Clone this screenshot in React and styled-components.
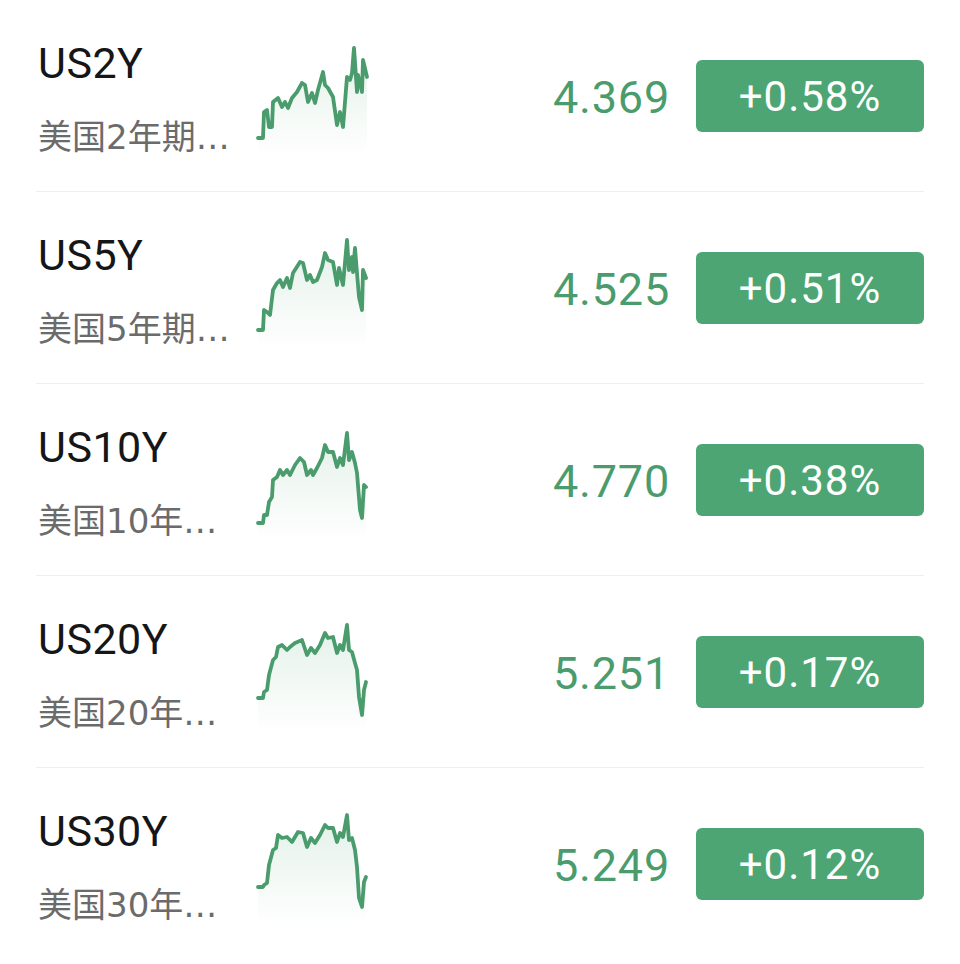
import React from "react";
import styled, { createGlobalStyle } from "styled-components";

const GlobalStyle = createGlobalStyle`
  body {
    margin: 0;
    background: #ffffff;
    font-family: Roboto, "Noto Sans CJK SC", sans-serif;
  }
`;

const List = styled.div`
  margin: 0 36px;
  display: flex;
  flex-direction: column;
`;

const Row = styled.div`
  height: 191px;
  display: flex;
  flex-direction: row;
  align-items: center;
  padding-left: 2px;
  border-bottom: ${(props) => (props.last ? "none" : "1px solid #eeeeee")};
`;

const NameColumn = styled.div`
  width: 198px;
  padding: 5px 20px 0 0;
  display: flex;
  flex-direction: column;
`;

const Symbol = styled.div`
  font-size: 43px;
  line-height: 50px;
  color: #161616;
  letter-spacing: 0.5px;
`;

const Subtitle = styled.div`
  margin-top: 27px;
  font-family: "DejaVu Sans", "Noto Sans CJK SC", sans-serif;
  font-size: 34px;
  line-height: 44px;
  color: #6b6b6b;
  white-space: nowrap;
  overflow: hidden;
  text-overflow: ellipsis;
`;

const Spark = styled.svg`
  flex-shrink: 0;
  display: block;
  align-self: stretch;
`;

const Spacer = styled.div`
  flex: 1;
`;

const Price = styled.div`
  padding-top: 4px;
  font-size: 45px;
  line-height: 54px;
  color: #4a9c6d;
  letter-spacing: 0.8px;
`;

const Badge = styled.div`
  margin-left: 26px;
  width: 228px;
  height: 72px;
  border-radius: 6px;
  background: #4ea574;
  color: #ffffff;
  display: flex;
  justify-content: center;
  align-items: center;
  font-size: 42px;
  letter-spacing: 1px;
  padding-top: 2px;
  box-sizing: border-box;
`;

const rows = [
  {
    symbol: "US2Y",
    name: "美国2年期国债收益率",
    price: "4.369",
    change: "+0.58%",
    points: [
      [258, 138], [263, 138], [264, 112], [267, 110], [269, 127], [272, 127],
      [273, 102], [278, 98], [282, 107], [285, 102], [288, 108], [292, 98],
      [297, 92], [302, 83], [305, 85], [308, 102], [312, 93], [315, 103],
      [318, 90], [323, 72], [325, 85], [328, 88], [333, 97], [337, 125],
      [340, 112], [343, 127], [347, 77], [350, 80], [352, 73], [354, 48],
      [357, 92], [358, 75], [362, 92], [363, 60], [367, 77],
    ],
  },
  {
    symbol: "US5Y",
    name: "美国5年期国债收益率",
    price: "4.525",
    change: "+0.51%",
    points: [
      [258, 138], [263, 138], [264, 118], [267, 120], [270, 123], [273, 98],
      [277, 91], [280, 88], [283, 95], [287, 86], [290, 96], [293, 81],
      [300, 70], [303, 71], [307, 88], [310, 83], [313, 90], [317, 88],
      [322, 75], [325, 61], [328, 68], [333, 70], [337, 93], [339, 76],
      [343, 93], [347, 48], [349, 78], [352, 65], [353, 80], [355, 56],
      [357, 81], [359, 105], [362, 118], [363, 78], [366, 86],
    ],
  },
  {
    symbol: "US10Y",
    name: "美国10年期国债收益率",
    price: "4.770",
    change: "+0.38%",
    points: [
      [258, 139], [263, 139], [264, 131], [267, 131], [269, 118], [272, 113],
      [273, 96], [277, 93], [280, 86], [283, 91], [287, 86], [290, 91],
      [295, 81], [300, 74], [304, 78], [307, 91], [311, 86], [313, 91],
      [317, 84], [322, 74], [325, 61], [328, 68], [333, 68], [337, 83],
      [340, 74], [343, 81], [347, 49], [349, 76], [352, 68], [355, 79],
      [357, 89], [360, 126], [362, 134], [364, 101], [366, 103],
    ],
  },
  {
    symbol: "US20Y",
    name: "美国20年期国债收益率",
    price: "5.251",
    change: "+0.17%",
    points: [
      [258, 122], [263, 122], [264, 116], [267, 114], [269, 99], [273, 84],
      [276, 81], [278, 71], [282, 69], [287, 74], [290, 71], [295, 67],
      [302, 64], [307, 79], [311, 72], [315, 77], [320, 69], [325, 57],
      [328, 62], [333, 61], [337, 77], [340, 69], [343, 74], [347, 49],
      [349, 74], [352, 76], [355, 87], [357, 94], [359, 121], [362, 139],
      [364, 114], [366, 106],
    ],
  },
  {
    symbol: "US30Y",
    name: "美国30年期国债收益率",
    price: "5.249",
    change: "+0.12%",
    points: [
      [258, 119], [263, 119], [264, 117], [267, 115], [269, 97], [273, 82],
      [276, 80], [278, 67], [282, 70], [287, 69], [292, 74], [298, 64],
      [303, 65], [307, 79], [311, 70], [315, 75], [320, 67], [325, 57],
      [328, 60], [333, 60], [337, 74], [340, 65], [343, 69], [347, 47],
      [349, 72], [352, 70], [355, 82], [357, 99], [359, 130], [362, 139],
      [364, 114], [366, 109],
    ],
  },
];

const Sparkline = ({ id, points }) => {
  const line = points.map(([x, y]) => `${x},${y}`).join(" ");
  const first = points[0];
  const last = points[points.length - 1];
  const area = `${line} ${last[0]},158 ${first[0]},158`;
  return (
    <Spark width="116" height="191" viewBox="256 0 116 191">
      <defs>
        <linearGradient
          id={`fill-${id}`}
          gradientUnits="userSpaceOnUse"
          x1="0"
          y1="45"
          x2="0"
          y2="158"
        >
          <stop offset="0" stopColor="#4ea574" stopOpacity="0.16" />
          <stop offset="1" stopColor="#4ea574" stopOpacity="0" />
        </linearGradient>
      </defs>
      <polygon points={area} fill={`url(#fill-${id})`} />
      <polyline
        points={line}
        fill="none"
        stroke="#4a9c6d"
        strokeWidth="3.8"
        strokeLinejoin="round"
        strokeLinecap="round"
      />
    </Spark>
  );
};

const App = () => (
  <>
    <GlobalStyle />
    <List>
      {rows.map((row, i) => (
        <Row key={row.symbol} last={i === rows.length - 1}>
          <NameColumn>
            <Symbol>{row.symbol}</Symbol>
            <Subtitle>{row.name}</Subtitle>
          </NameColumn>
          <Sparkline id={row.symbol} points={row.points} />
          <Spacer />
          <Price>{row.price}</Price>
          <Badge>{row.change}</Badge>
        </Row>
      ))}
    </List>
  </>
);

export default App;
